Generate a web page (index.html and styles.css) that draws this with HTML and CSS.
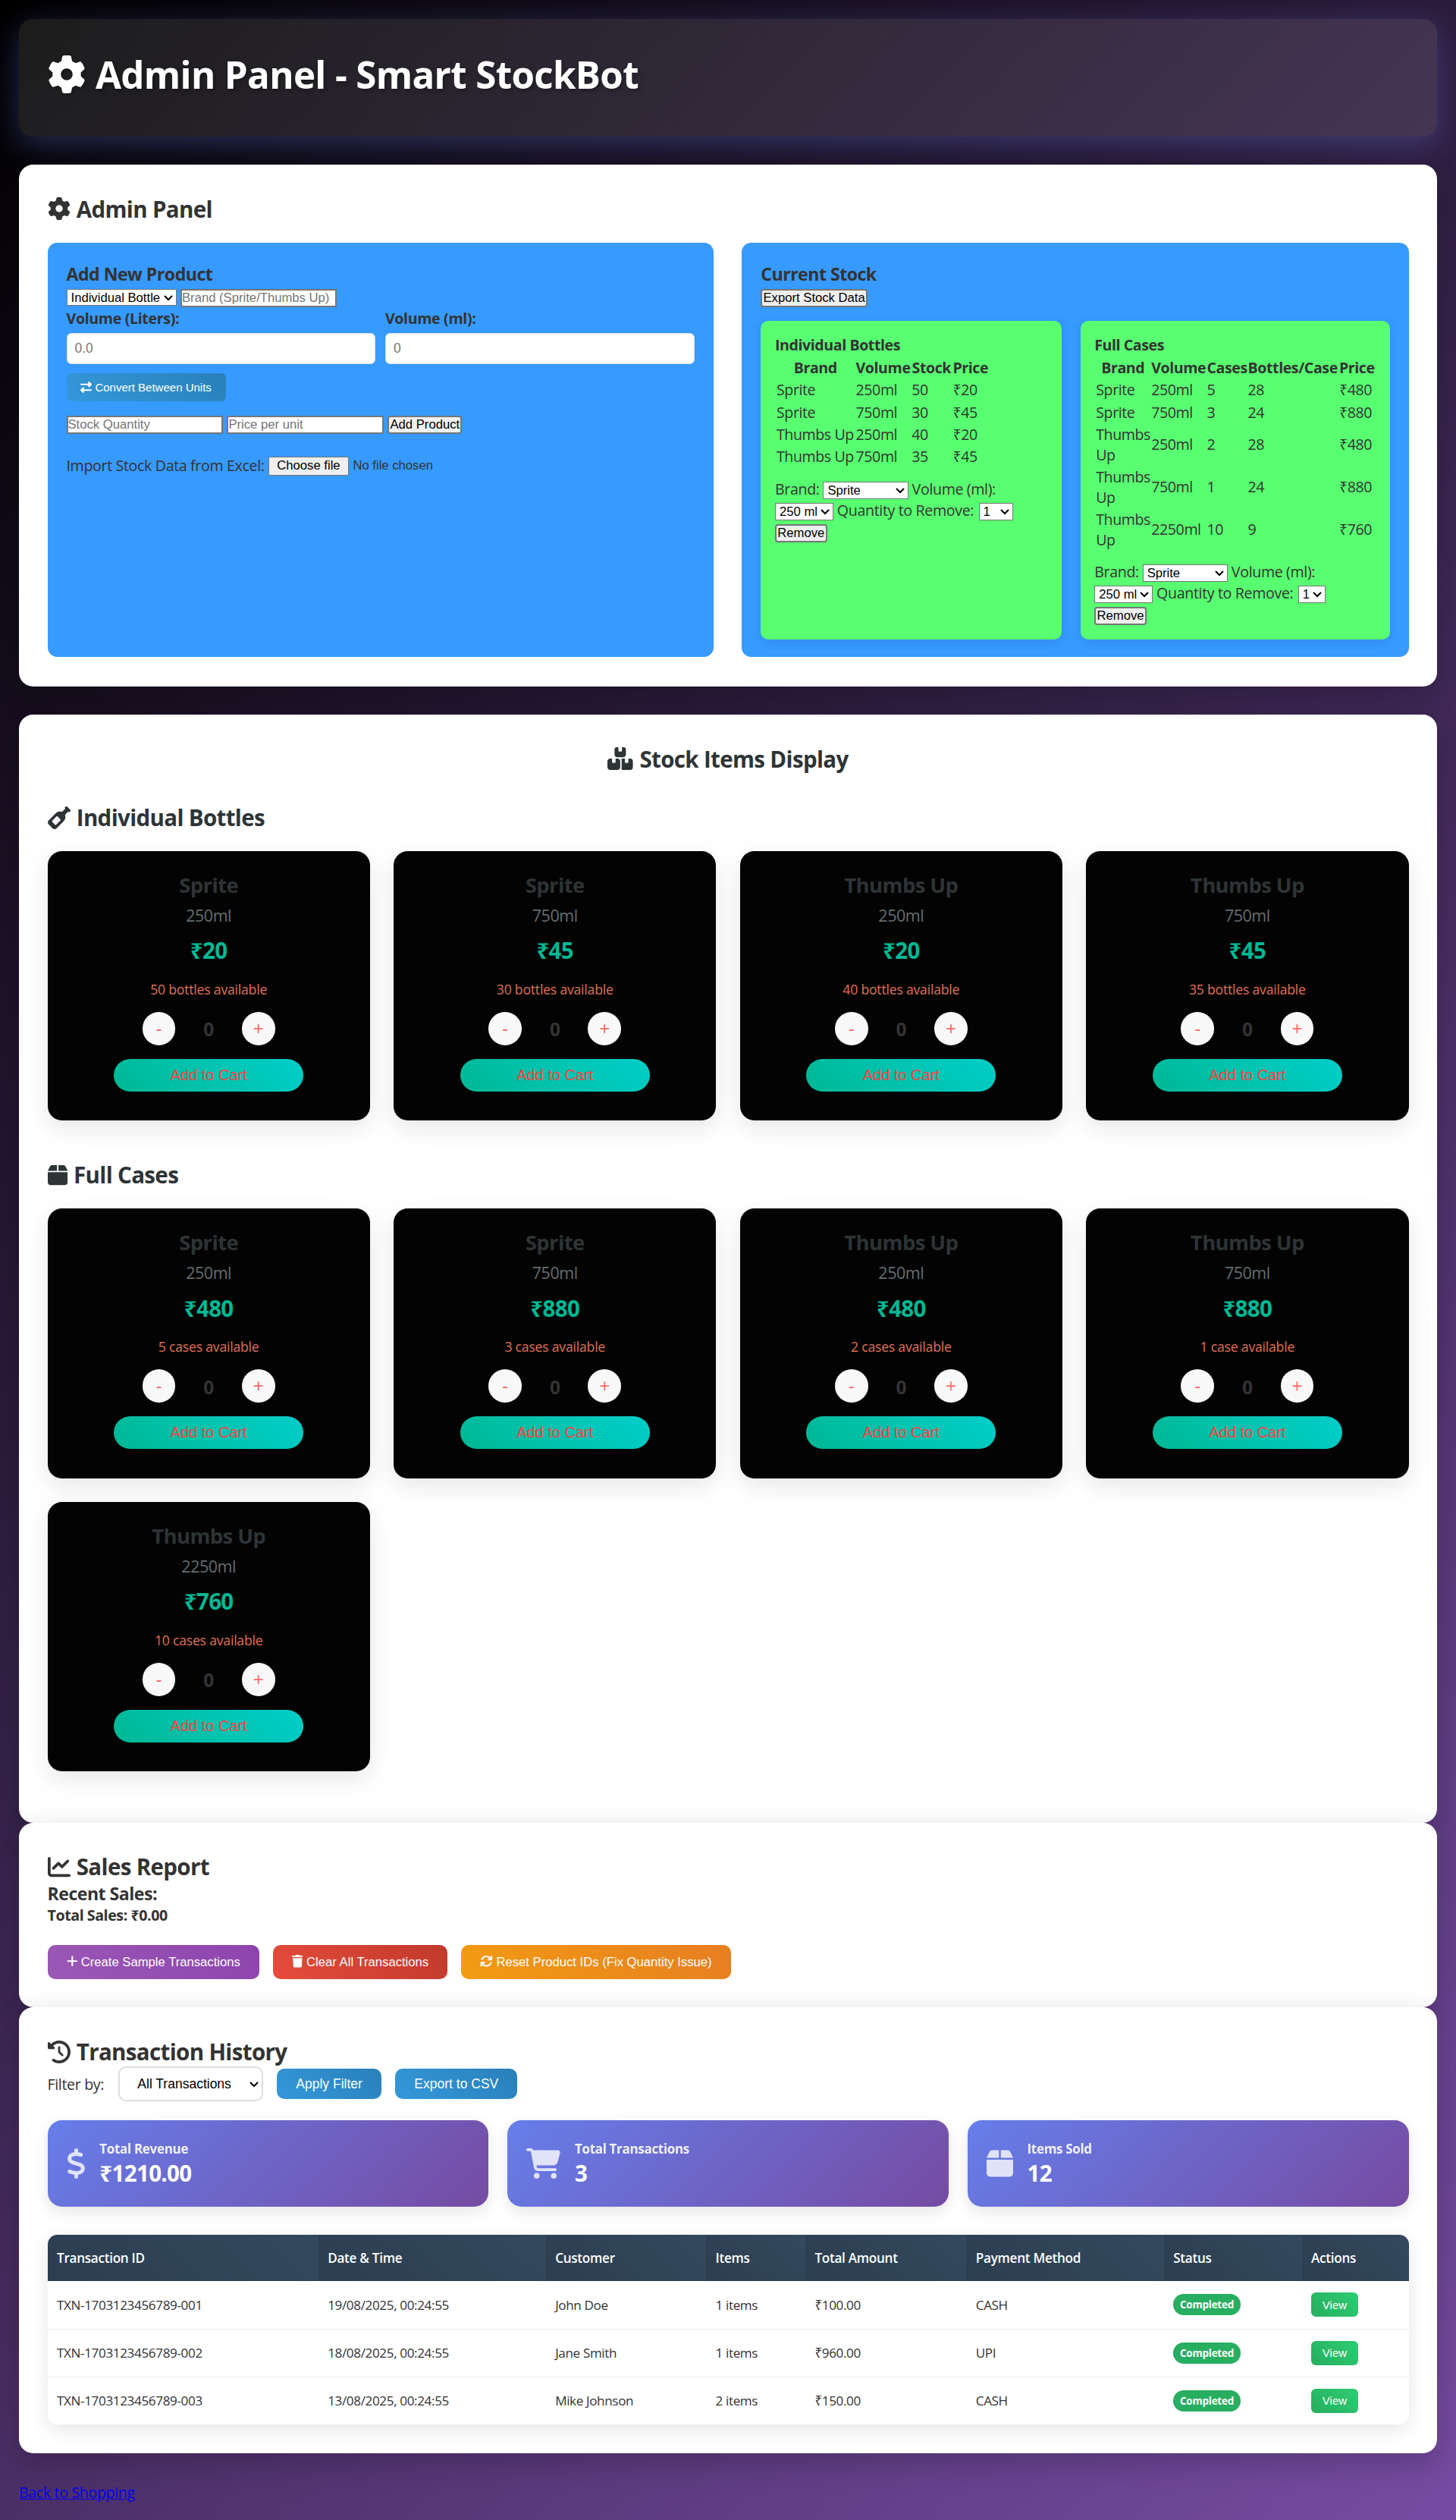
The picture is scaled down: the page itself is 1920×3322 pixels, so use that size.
FILE: index.html
```html
<!DOCTYPE html>
<html lang="en">
<head>
<meta charset="utf-8">
<title>Admin Panel - Smart StockBot</title>
<link rel="stylesheet" href="styles.css">
</head>
<body>
<svg class="sprite" aria-hidden="true">
  <symbol id="cog" viewBox="0 0 512 512"><path d="M495.900 166.600c3.200 8.700 .5 18.400-6.400 24.600l-43.300 39.400c1.100 8.300 1.700 16.800 1.700 25.400s-.6 17.100-1.700 25.400l43.300 39.400c6.900 6.200 9.600 15.900 6.400 24.600c-4.400 11.900-9.700 23.300-15.800 34.300l-4.700 8.100c-6.600 11-14 21.400-22.100 31.200c-5.900 7.200-15.700 9.600-24.500 6.800l-55.700-17.700c-13.400 10.300-28.200 18.900-44 25.400l-12.500 57.100c-2 9.100-9 16.300-18.200 17.800c-13.800 2.300-28 3.500-42.500 3.500s-28.700-1.200-42.500-3.500c-9.200-1.500-16.200-8.700-18.200-17.800l-12.500-57.100c-15.800-6.500-30.600-15.100-44-25.400L83.100 425.900c-8.800 2.800-18.600 .3-24.500-6.800c-8.100-9.800-15.500-20.200-22.100-31.200l-4.700-8.100c-6.100-11-11.400-22.400-15.800-34.300c-3.200-8.700-.5-18.400 6.400-24.600l43.300-39.400C64.600 273.100 64 264.600 64 256s.6-17.100 1.700-25.400L22.400 191.200c-6.900-6.200-9.600-15.900-6.400-24.600c4.400-11.900 9.700-23.300 15.800-34.300l4.700-8.100c6.600-11 14-21.400 22.100-31.200c5.900-7.200 15.700-9.600 24.500-6.800l55.700 17.700c13.400-10.300 28.200-18.900 44-25.400l12.500-57.100c2-9.100 9-16.300 18.200-17.800C227.300 1.200 241.500 0 256 0s28.700 1.200 42.500 3.500c9.200 1.500 16.200 8.700 18.200 17.800l12.500 57.100c15.800 6.500 30.600 15.100 44 25.400l55.700-17.700c8.800-2.800 18.600-.3 24.500 6.800c8.100 9.800 15.500 20.200 22.100 31.200l4.700 8.100c6.100 11 11.400 22.400 15.800 34.300zM256 336a80 80 0 1 0 0-160 80 80 0 1 0 0 160z"/></symbol>
  <symbol id="boxes" viewBox="0 0 576 512"><path d="M248 0H208c-26.500 0-48 21.500-48 48V160c0 35.300 28.700 64 64 64H352c35.300 0 64-28.700 64-64V48c0-26.500-21.500-48-48-48H328V80c0 8.800-7.200 16-16 16H264c-8.800 0-16-7.200-16-16V0zM64 256c-35.300 0-64 28.700-64 64V448c0 35.300 28.700 64 64 64H224c35.300 0 64-28.700 64-64V320c0-35.300-28.700-64-64-64H184v80c0 8.800-7.200 16-16 16H120c-8.800 0-16-7.200-16-16V256H64zM352 512H512c35.300 0 64-28.700 64-64V320c0-35.300-28.700-64-64-64H472v80c0 8.800-7.200 16-16 16H408c-8.800 0-16-7.200-16-16V256H352c-15 0-28.800 5.100-39.700 13.800c4.900 10.400 7.700 22 7.700 34.200V464c0 12.200-2.800 23.800-7.700 34.200C323.200 506.900 337 512 352 512z"/></symbol>
  <symbol id="bottle" viewBox="0 0 512 512"><path d="M393.400 9.400c12.500-12.500 32.800-12.500 45.300 0l64 64c12.500 12.500 12.500 32.800 0 45.300c-11.800 11.800-30.700 12.500-43.200 1.900l-9.500 9.500-48.800 48.800c-9.200 9.200-11.500 22.900-8.600 35.600c9.400 40.900-1.900 85.600-33.800 117.500L197.300 493.300c-25 25-65.500 25-90.500 0l-88-88c-25-25-25-65.500 0-90.500L180.200 153.300c31.900-31.900 76.600-43.100 117.500-33.800c12.600 2.900 26.400 .5 35.500-8.600l48.800-48.800 9.500-9.500c-10.600-12.600-10-31.400 1.900-43.200zM99.300 347.300l65.400 65.400c6.200 6.200 16.400 6.200 22.600 0l97.400-97.400c6.200-6.200 6.200-16.400 0-22.600l-65.400-65.400c-6.200-6.200-16.400-6.200-22.600 0L99.300 324.700c-6.200 6.200-6.200 16.400 0 22.600z"/></symbol>
  <symbol id="box" viewBox="0 0 448 512"><path d="M50.700 58.500L0 160H208V32H93.700C75.500 32 58.900 42.300 50.700 58.500zM240 160H448L397.300 58.500C389.100 42.300 372.500 32 354.300 32H240V160zm208 32H0V416c0 35.300 28.700 64 64 64H384c35.300 0 64-28.700 64-64V192z"/></symbol>
  <symbol id="chart" viewBox="0 0 512 512"><path d="M64 64c0-17.700-14.300-32-32-32S0 46.300 0 64V400c0 44.200 35.800 80 80 80H480c17.700 0 32-14.300 32-32s-14.300-32-32-32H80c-8.800 0-16-7.200-16-16V64zm406.600 86.600c12.500-12.500 12.500-32.800 0-45.300s-32.800-12.500-45.300 0L320 210.700l-57.400-57.400c-12.500-12.500-32.800-12.500-45.300 0l-112 112c-12.500 12.500-12.500 32.800 0 45.300s32.800 12.500 45.300 0L240 221.300l57.400 57.400c12.500 12.500 32.800 12.500 45.300 0l128-128z"/></symbol>
  <symbol id="history" viewBox="0 0 512 512"><path d="M75 75L41 41C25.900 25.900 0 36.600 0 57.900V168c0 13.300 10.700 24 24 24H134.100c21.400 0 32.100-25.900 17-41l-30.800-30.800C155 85.500 203 64 256 64c106 0 192 86 192 192s-86 192-192 192c-40.800 0-78.600-12.700-109.700-34.400c-14.500-10.100-34.400-6.600-44.600 7.900s-6.600 34.400 7.900 44.600C151.200 495 201.700 512 256 512c141.400 0 256-114.600 256-256S397.400 0 256 0C185.300 0 121.300 28.700 75 75zm181 53c-13.300 0-24 10.700-24 24V256c0 6.400 2.500 12.500 7 17l72 72c9.400 9.400 24.600 9.400 33.900 0s9.400-24.600 0-33.900l-65-65V152c0-13.300-10.700-24-24-24z"/></symbol>
  <symbol id="exchange" viewBox="0 0 512 512"><path d="M32 96l320 0V32c0-12.900 7.800-24.600 19.800-29.600s25.700-2.200 34.900 6.900l96 96c6 6 9.400 14.100 9.400 22.600s-3.400 16.600-9.400 22.600l-96 96c-9.200 9.200-22.900 11.900-34.900 6.900s-19.800-16.600-19.800-29.600V160L32 160c-17.700 0-32-14.300-32-32s14.300-32 32-32zM480 352c17.700 0 32 14.300 32 32s-14.300 32-32 32H160v64c0 12.900-7.800 24.600-19.800 29.600s-25.700 2.200-34.900-6.900l-96-96c-6-6-9.400-14.100-9.400-22.600s3.400-16.600 9.400-22.600l96-96c9.200-9.200 22.900-11.900 34.900-6.900s19.800 16.600 19.800 29.600l0 64H480z"/></symbol>
  <symbol id="plus" viewBox="0 0 448 512"><path d="M256 80c0-17.700-14.300-32-32-32s-32 14.300-32 32V224H48c-17.700 0-32 14.300-32 32s14.300 32 32 32H192V432c0 17.700 14.300 32 32 32s32-14.300 32-32V288H400c17.700 0 32-14.300 32-32s-14.300-32-32-32H256V80z"/></symbol>
  <symbol id="trash" viewBox="0 0 448 512"><path d="M135.200 17.700L128 32H32C14.300 32 0 46.300 0 64S14.300 96 32 96H416c17.700 0 32-14.300 32-32s-14.300-32-32-32H320l-7.200-14.300C307.400 6.800 296.300 0 284.200 0H163.800c-12.100 0-23.200 6.800-28.600 17.700zM416 128H32L53.200 467c1.600 25.300 22.600 45 47.900 45H346.900c25.300 0 46.300-19.700 47.900-45L416 128z"/></symbol>
  <symbol id="sync" viewBox="0 0 512 512"><path d="M105.100 202.600c7.700-21.800 20.200-42.300 37.800-59.800c62.500-62.500 163.800-62.500 226.300 0L386.300 160H336c-17.700 0-32 14.300-32 32s14.300 32 32 32H463.900c17.700 0 32-14.300 32-32V64c0-17.700-14.300-32-32-32s-32 14.300-32 32v51.200L414.400 97.600c-87.500-87.500-229.300-87.500-316.800 0C73.200 122 55.600 150.700 44.800 181.400c-5.900 16.700 2.900 34.900 19.500 40.800s34.900-2.900 40.800-19.500zM39 289.300c-5 1.500-9.800 4.200-13.700 8.200c-4 4-6.700 8.800-8.100 14c-.3 1.200-.6 2.500-.8 3.800c-.3 1.700-.4 3.400-.4 5.100V448c0 17.700 14.300 32 32 32s32-14.300 32-32V396.900l17.600 17.500c87.500 87.400 229.300 87.400 316.700 0c24.400-24.400 42.100-53.100 52.900-83.700c5.900-16.700-2.900-34.900-19.500-40.800s-34.900 2.900-40.800 19.500c-7.700 21.800-20.200 42.300-37.800 59.800c-62.500 62.500-163.800 62.500-226.300 0L125.600 352H176c17.700 0 32-14.300 32-32s-14.300-32-32-32H48.400c-1.600 0-3.200 .1-4.800 .3s-3.100 .5-4.600 1z"/></symbol>
  <symbol id="dollar" viewBox="0 0 320 512"><path d="M160 0c17.700 0 32 14.300 32 32V67.700c1.600 .2 3.100 .4 4.700 .7c.4 .1 .7 .1 1.100 .2l48 8.800c17.400 3.200 28.900 19.900 25.700 37.200s-19.900 28.900-37.200 25.700l-47.500-8.700c-31.300-4.600-58.900-1.500-78.300 6.200s-27.200 18.300-29 28.100c-2 10.700-.5 16.700 1.200 20.400c1.800 3.900 5.500 8.300 12.800 13.200c16.300 10.700 41.300 17.700 73.700 26.300l2.900 .8c28.600 7.600 63.600 16.800 89.600 33.800c14.200 9.300 27.600 21.900 35.900 39.500c8.500 17.900 10.300 37.900 6.400 59.200c-6.900 38-33.100 63.400-65.600 76.700c-13.700 5.600-28.600 9.200-44.400 11V480c0 17.700-14.300 32-32 32s-32-14.300-32-32V445.100c-.4-.1-.9-.1-1.300-.2l-.2 0c-24.400-3.800-64.500-14.300-91.500-26.300c-16.100-7.200-23.400-26.100-16.200-42.200s26.100-23.400 42.200-16.200c20.900 9.300 55.300 18.500 75.200 21.600c31.900 4.700 58.200 2 76-5.300c16.900-6.900 24.600-16.900 26.800-28.900c1.900-10.600 .4-16.700-1.300-20.400c-1.900-4-5.600-8.400-13-13.300c-16.400-10.700-41.500-17.700-74-26.300l-2.800-.7C119.400 279.300 84.400 270 58.400 253c-14.200-9.300-27.500-22-35.800-39.600c-8.400-17.900-10.100-37.900-6.100-59.200C23.700 116 52.300 91.200 84.800 78.300c13.300-5.300 27.900-8.900 43.200-11V32c0-17.700 14.300-32 32-32z"/></symbol>
  <symbol id="cart" viewBox="0 0 576 512"><path d="M0 24C0 10.700 10.700 0 24 0H69.500c22 0 41.500 12.800 50.600 32h411c26.300 0 45.500 25 38.600 50.400l-41 152.300c-8.500 31.400-37 53.300-69.500 53.300H170.700l5.400 28.500c2.200 11.300 12.100 19.500 23.600 19.500H488c13.300 0 24 10.700 24 24s-10.700 24-24 24H199.700c-34.600 0-64.300-24.600-70.700-58.500L77.400 54.500c-.7-3.800-4-6.500-7.900-6.500H24C10.700 48 0 37.300 0 24zM128 464a48 48 0 1 1 96 0 48 48 0 1 1-96 0zm336-48a48 48 0 1 1 0 96 48 48 0 1 1 0-96z"/></symbol>
</svg>

<header class="page-header">
  <h1><svg class="icon"><use href="#cog"/></svg> Admin Panel - Smart StockBot</h1>
</header>

<section class="card admin">
  <h2 class="title"><svg class="icon"><use href="#cog"/></svg> Admin Panel</h2>
  <div class="panels">
    <div class="panel">
      <h3>Add New Product</h3>
      <div class="line">
        <select class="type-select"><option>Individual Bottle</option></select>
        <input class="plain" type="text" placeholder="Brand (Sprite/Thumbs Up)">
      </div>
      <div class="volumes">
        <div><label>Volume (Liters):</label><input class="volume" type="text" placeholder="0.0"></div>
        <div><label>Volume (ml):</label><input class="volume" type="text" placeholder="0"></div>
      </div>
      <button class="convert"><svg class="icon"><use href="#exchange"/></svg> Convert Between Units</button>
      <div class="line stock-line">
        <input class="plain" type="text" placeholder="Stock Quantity">
        <input class="plain" type="text" placeholder="Price per unit">
        <button class="native">Add Product</button>
      </div>
      <div class="import">
        <label>Import Stock Data from Excel:</label>
        <button class="choose">Choose file</button>
        <span class="nofile">No file chosen</span>
      </div>
    </div>
    <div class="panel">
      <h3>Current Stock</h3>
      <div class="line"><button class="native">Export Stock Data</button></div>
      <div class="stocks">
        <div class="stock">
          <h4>Individual Bottles</h4>
          <table class="bottles">
            <colgroup><col class="c-brand"><col class="c-vol"><col class="c-num"><col class="c-price"></colgroup>
            <tr><th>Brand</th><th>Volume</th><th>Stock</th><th>Price</th></tr>
            <tr><td>Sprite</td><td>250ml</td><td>50</td><td>₹20</td></tr>
            <tr><td>Sprite</td><td>750ml</td><td>30</td><td>₹45</td></tr>
            <tr><td>Thumbs Up</td><td>250ml</td><td>40</td><td>₹20</td></tr>
            <tr><td>Thumbs Up</td><td>750ml</td><td>35</td><td>₹45</td></tr>
          </table>
          <div class="remove">
            <div>Brand: <select class="s-brand"><option>Sprite</option></select> Volume (ml):</div>
            <div><select class="s-vol"><option>250 ml</option></select> Quantity to Remove: <select class="s-qty"><option>1</option></select></div>
            <div><button class="native">Remove</button></div>
          </div>
        </div>
        <div class="stock">
          <h4>Full Cases</h4>
          <table class="cases">
            <colgroup><col class="c-short"><col class="c-vol"><col class="c-num"><col class="c-per"><col class="c-price"></colgroup>
            <tr><th>Brand</th><th>Volume</th><th>Cases</th><th>Bottles/Case</th><th>Price</th></tr>
            <tr><td>Sprite</td><td>250ml</td><td>5</td><td>28</td><td>₹480</td></tr>
            <tr><td>Sprite</td><td>750ml</td><td>3</td><td>24</td><td>₹880</td></tr>
            <tr><td>Thumbs<br>Up</td><td>250ml</td><td>2</td><td>28</td><td>₹480</td></tr>
            <tr><td>Thumbs<br>Up</td><td>750ml</td><td>1</td><td>24</td><td>₹880</td></tr>
            <tr><td>Thumbs<br>Up</td><td>2250ml</td><td>10</td><td>9</td><td>₹760</td></tr>
          </table>
          <div class="remove">
            <div>Brand: <select class="s-brand"><option>Sprite</option></select> Volume (ml):</div>
            <div><select class="s-vol"><option>250 ml</option></select> Quantity to Remove: <select class="s-one"><option>1</option></select></div>
            <div><button class="native">Remove</button></div>
          </div>
        </div>
      </div>
    </div>
  </div>
</section>

<section class="card display">
  <h2 class="title centered"><svg class="icon wide"><use href="#boxes"/></svg> Stock Items Display</h2>
  <h3 class="title"><svg class="icon"><use href="#bottle"/></svg> Individual Bottles</h3>
  <div class="items">
    <div class="item"><h4>Sprite</h4><p class="size">250ml</p><p class="price">₹20</p><p class="left">50 bottles available</p><div class="qty"><button>-</button><span>0</span><button>+</button></div><button class="add">Add to Cart</button></div>
    <div class="item"><h4>Sprite</h4><p class="size">750ml</p><p class="price">₹45</p><p class="left">30 bottles available</p><div class="qty"><button>-</button><span>0</span><button>+</button></div><button class="add">Add to Cart</button></div>
    <div class="item"><h4>Thumbs Up</h4><p class="size">250ml</p><p class="price">₹20</p><p class="left">40 bottles available</p><div class="qty"><button>-</button><span>0</span><button>+</button></div><button class="add">Add to Cart</button></div>
    <div class="item"><h4>Thumbs Up</h4><p class="size">750ml</p><p class="price">₹45</p><p class="left">35 bottles available</p><div class="qty"><button>-</button><span>0</span><button>+</button></div><button class="add">Add to Cart</button></div>
  </div>
  <h3 class="title"><svg class="icon narrow"><use href="#box"/></svg> Full Cases</h3>
  <div class="items last">
    <div class="item"><h4>Sprite</h4><p class="size">250ml</p><p class="price">₹480</p><p class="left">5 cases available</p><div class="qty"><button>-</button><span>0</span><button>+</button></div><button class="add">Add to Cart</button></div>
    <div class="item"><h4>Sprite</h4><p class="size">750ml</p><p class="price">₹880</p><p class="left">3 cases available</p><div class="qty"><button>-</button><span>0</span><button>+</button></div><button class="add">Add to Cart</button></div>
    <div class="item"><h4>Thumbs Up</h4><p class="size">250ml</p><p class="price">₹480</p><p class="left">2 cases available</p><div class="qty"><button>-</button><span>0</span><button>+</button></div><button class="add">Add to Cart</button></div>
    <div class="item"><h4>Thumbs Up</h4><p class="size">750ml</p><p class="price">₹880</p><p class="left">1 case available</p><div class="qty"><button>-</button><span>0</span><button>+</button></div><button class="add">Add to Cart</button></div>
    <div class="item"><h4>Thumbs Up</h4><p class="size">2250ml</p><p class="price">₹760</p><p class="left">10 cases available</p><div class="qty"><button>-</button><span>0</span><button>+</button></div><button class="add">Add to Cart</button></div>
  </div>
</section>

<section class="card">
  <h2 class="title"><svg class="icon"><use href="#chart"/></svg> Sales Report</h2>
  <h3>Recent Sales:</h3>
  <h4>Total Sales: ₹0.00</h4>
  <div class="actions">
    <button class="act purple"><svg class="icon narrow"><use href="#plus"/></svg> Create Sample Transactions</button>
    <button class="act red"><svg class="icon narrow"><use href="#trash"/></svg> Clear All Transactions</button>
    <button class="act orange"><svg class="icon"><use href="#sync"/></svg> Reset Product IDs (Fix Quantity Issue)</button>
  </div>
</section>

<section class="card">
  <h2 class="title"><svg class="icon"><use href="#history"/></svg> Transaction History</h2>
  <div class="filter">
    <label>Filter by:</label>
    <select class="filter-select"><option>All Transactions</option></select>
    <button>Apply Filter</button>
    <button>Export to CSV</button>
  </div>
  <div class="stats">
    <div class="stat"><svg class="icon slim"><use href="#dollar"/></svg><div><h4>Total Revenue</h4><p>₹1210.00</p></div></div>
    <div class="stat"><svg class="icon wide"><use href="#cart"/></svg><div><h4>Total Transactions</h4><p>3</p></div></div>
    <div class="stat"><svg class="icon narrow"><use href="#box"/></svg><div><h4>Items Sold</h4><p>12</p></div></div>
  </div>
  <div class="history">
    <table>
      <colgroup><col class="w1"><col class="w2"><col class="w3"><col class="w4"><col class="w5"><col class="w6"><col class="w7"><col></colgroup>
      <tr><th>Transaction ID</th><th>Date &amp; Time</th><th>Customer</th><th>Items</th><th>Total Amount</th><th>Payment Method</th><th>Status</th><th>Actions</th></tr>
      <tr><td>TXN-1703123456789-001</td><td>19/08/2025, 00:24:55</td><td>John Doe</td><td>1 items</td><td>₹100.00</td><td>CASH</td><td><span class="badge">Completed</span></td><td><button>View</button></td></tr>
      <tr><td>TXN-1703123456789-002</td><td>18/08/2025, 00:24:55</td><td>Jane Smith</td><td>1 items</td><td>₹960.00</td><td>UPI</td><td><span class="badge">Completed</span></td><td><button>View</button></td></tr>
      <tr><td>TXN-1703123456789-003</td><td>13/08/2025, 00:24:55</td><td>Mike Johnson</td><td>2 items</td><td>₹150.00</td><td>CASH</td><td><span class="badge">Completed</span></td><td><button>View</button></td></tr>
    </table>
  </div>
</section>

<a class="back" href="#">Back to Shopping</a>
</body>
</html>
```

FILE: styles.css
```css
* { margin: 0; padding: 0; box-sizing: border-box; }

html { zoom: 1.25; font-size: 15.7px; }

body {
  padding: 20px;
  min-height: 2657.6px;
  font-family: "Open Sans", "Noto Sans", sans-serif;
  font-size: 1rem;
  line-height: 1.36;
  letter-spacing: -.018em;
  color: #333;
  background: linear-gradient(135deg, #000 0%, #764ba2 100%);
}

h1, h2, h3, h4, p, th, td { letter-spacing: -.022em; }
label, span, a { letter-spacing: -.018em; }
button, input, select { font-family: "Liberation Sans", Arial, sans-serif; font-size: 13.333px; }

.sprite { display: none; }
.icon { width: 1em; height: 1em; fill: currentColor; vertical-align: -0.125em; }
.icon.wide { width: 1.125em; }
.icon.narrow { width: .875em; }
.icon.slim { width: .625em; }

.page-header {
  height: 124px;
  margin-bottom: 29.6px;
  padding: 32px 30px;
  border-radius: 15px;
  background: linear-gradient(135deg, #1c1c1c, #453555);
  box-shadow: 0 8px 32px rgba(102, 126, 234, .32);
}
.page-header h1 { font-size: 39.4px; line-height: 53px; letter-spacing: -.013em; color: #fff; text-shadow: 2px 2px 4px rgba(0, 0, 0, .3); }
.page-header .icon { width: 40px; height: 40px; margin-right: 1px; filter: drop-shadow(2px 2px 2px rgba(0, 0, 0, .3)); }

.card { padding: 30px; border-radius: 15px; background: #fff; box-shadow: 0 10px 30px rgba(0, 0, 0, .2); }
.admin { height: 550px; margin-bottom: 29.6px; }
.title { font-size: 23.6px; line-height: 33.5px; margin-bottom: -1.6px; }
.title .icon { width: 24px; height: 24px; margin-right: 1px; }
.title .icon.wide { width: 27px; }
.title .icon.narrow { width: 21px; }
h3 { font-size: 18.5px; line-height: 26.1px; margin-bottom: -1.2px; }
h4 { font-size: 15.7px; line-height: 22.3px; margin-bottom: -1px; }

.panels { display: grid; grid-template-columns: 1fr 1fr; gap: 30px; height: 437.4px; margin-top: 20.2px; }
.panel { padding: 20px; border-radius: 10px; background: #369aff; }
.line { display: flex; align-items: flex-start; gap: 4.4px; height: 24px; padding-top: 4px; }
.plain { width: 165.1px; height: 19px; border: 1.6px solid #767676; background: #fff; }
.type-select { width: 116px; height: 18px; }
select { background: #fff; color: #000; border: 1px solid #767676; }
.native { height: 19px; padding: 0 1px; border: 1.6px solid #767676; border-radius: 3px; background: #efefef; color: #000; white-space: nowrap; }

.volumes { display: flex; gap: 10px; }
.volumes > div { flex: 1; }
.volumes label { display: block; margin-bottom: 4px; font-weight: 700; line-height: 22.3px; }
.volume { display: block; width: 100%; height: 33px; padding: 8px; border: 1px solid #ddd; border-radius: 5px; font-size: 14px; }
.convert { display: block; height: 29.4px; margin-top: 10px; padding: 0 15px; border: 0; border-radius: 5px; font-size: 12px; color: #fff; background: linear-gradient(45deg, #3498db, #2980b9); }
.stock-line { margin-top: 11px; }
.import { display: flex; align-items: center; gap: 4.6px; margin-top: 22.5px; height: 21.3px; }
.choose { height: 20.5px; padding: 0 8px; border: 1px solid #767676; border-radius: 2px; background: #efefef; color: #000; }
.nofile { font: 13.333px "Liberation Sans", Arial, sans-serif; letter-spacing: 0; }

.stocks { display: grid; grid-template-columns: 317px 1fr; gap: 20px; margin-top: 13.4px; height: 335px; }
.stock { padding: 15px; border-radius: 8px; background: #58ff70; box-shadow: 0 2px 10px rgba(0, 0, 0, .1); }
.stock table { margin-top: 1px; table-layout: fixed; border-spacing: 2px; }
.bottles { width: 226px; }
.cases { width: 296.4px; }
.stock th, .stock td { padding-top: .6px; line-height: 21.3px; white-space: nowrap; }
.stock th { text-align: center; }
.c-brand { width: 80.8px; }
.c-short { width: 56.3px; }
.c-vol { width: 56.5px; }
.c-num { width: 41.1px; }
.c-per { width: 94px; }
.c-price { width: 36.3px; }
.remove { margin-top: 10.4px; }
.remove > div { height: 22.4px; line-height: 22.4px; white-space: nowrap; }
.remove select { height: 18px; }
.s-brand { width: 90px; }
.s-vol { width: 61.7px; }
.s-qty { width: 36px; margin-left: 1.4px; }
.s-one { width: 29px; margin-left: 1.4px; }

.display { height: 1169px; color: #2d3436; }
.centered { margin-bottom: 28.4px; padding-top: .5px; text-align: center; }
.items { display: grid; grid-template-columns: repeat(4, 1fr); gap: 25px; margin: 20px 0 40.6px; }
.item { display: flex; flex-direction: column; align-items: center; height: 284.4px; padding-top: 21px; border-radius: 15px; background: #030303; box-shadow: 0 8px 25px rgba(0, 0, 0, .1); }
.item h4 { margin: 0; font-size: 22px; line-height: 29.8px; }
.size { margin-top: 5px; font-size: 17.2px; line-height: 23.4px; color: #636e72; }
.price { margin-top: 10px; font-size: 23.6px; font-weight: 700; line-height: 31.9px; color: #00b894; }
.left { margin-top: 15px; font-size: 14.1px; line-height: 19.2px; letter-spacing: -.012em; color: #e17055; }
.qty { display: flex; align-items: center; gap: 15px; margin-top: 14.6px; }
.qty button { width: 35px; height: 35px; border: 0; border-radius: 50%; background: #f8f8f8; color: #ff6b6b; font-size: 19.2px; }
.qty span { width: 40px; padding-top: 1.6px; text-align: center; font-size: 19.6px; font-weight: 700; color: #333; }
.add { width: 200px; height: 34.4px; margin-top: 14.6px; border: 0; border-radius: 25px; background: linear-gradient(45deg, #00b894, #00cec9); color: #ff4040; font-size: 16px; }

.actions { display: flex; gap: 14.4px; margin-top: 21.2px; }
.act { height: 35.6px; padding: 0 20px; border: 0; border-radius: 8px; color: #fff; white-space: nowrap; }
.purple { background: linear-gradient(45deg, #9b59b6, #8e44ad); }
.red { background: linear-gradient(45deg, #e74c3c, #c0392b); }
.orange { background: linear-gradient(45deg, #f39c12, #e67e22); }

.filter { display: flex; align-items: center; gap: 14.8px; height: 37.3px; }
.filter label { padding-top: 1.4px; }
.filter-select { width: 153px; height: 36.3px; padding: 8px 15px; border: 2px solid #ddd; border-radius: 8px; font-size: 14px; }
.filter button { height: 32.5px; padding: 0 20px; border: 0; border-radius: 8px; font-size: 14px; color: #fff; background: linear-gradient(45deg, #3498db, #2980b9); }

.stats { display: grid; grid-template-columns: repeat(3, 1fr); gap: 20px; margin: 19.8px 0 29.4px; }
.stat { display: flex; align-items: center; gap: 15px; height: 91.3px; padding: 20px; border-radius: 15px; color: #fff; background: linear-gradient(135deg, #667eea, #764ba2); box-shadow: 0 5px 15px rgba(0, 0, 0, .1); }
.stat .icon { font-size: 32px; opacity: .8; }
.stat h4 { margin: 1px 0 0; font-size: 13.7px; line-height: 19.2px; opacity: .9; }
.stat p { font-size: 23.6px; font-weight: 700; line-height: 31.9px; }

.history { overflow: hidden; border-radius: 10px; box-shadow: 0 5px 20px rgba(0, 0, 0, .1); }
.history table { width: 100%; table-layout: fixed; border-collapse: collapse; font-size: 13.7px; line-height: 18.6px; }
.history th { height: 48.8px; padding: .8px 10px 0; text-align: left; font-weight: 600; letter-spacing: -.016em; color: #fff; background: linear-gradient(45deg, #2c3e50, #34495e); }
.history td { height: 50.4px; padding: 0 10px; border-bottom: 1px solid #eee; }
.history tr:last-child td { border-bottom: 0; }
.history button { display: block; width: 49.5px; height: 25.6px; border: 0; border-radius: 5px; font-size: 12px; color: #fff; background: linear-gradient(45deg, #27ae60, #2ecc71); }
.badge { display: inline-block; width: 71px; height: 22.4px; border-radius: 12px; font-size: 10.8px; font-weight: 700; line-height: 23.2px; text-align: center; color: #fff; background: #27ae60; }
.w1 { width: 285.7px; }
.w2 { width: 240px; }
.w3 { width: 169.1px; }
.w4 { width: 104.7px; }
.w5 { width: 169.9px; }
.w6 { width: 208.3px; }
.w7 { width: 145.5px; }

.back { display: inline-block; margin-top: 31.6px; color: #00e; line-height: 21.3px; }
```
